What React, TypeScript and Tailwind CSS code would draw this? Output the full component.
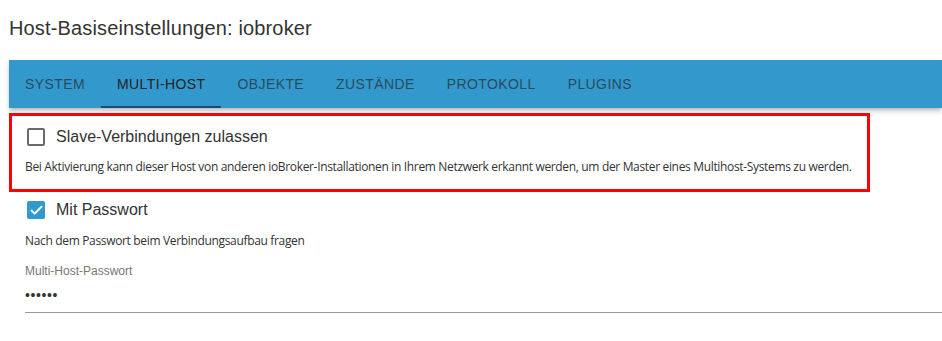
import { Check } from "lucide-react";

const TABS = ["System", "Multi-Host", "Objekte", "Zustände", "Protokoll", "Plugins"];

function CheckRow({ checked, label }: { checked: boolean; label: string }) {
  return (
    <div className="flex items-center h-[24px] pl-[27px]">
      {checked ? (
        <div className="w-[18px] h-[18px] rounded-[2px] bg-[#3399cc] flex items-center justify-center">
          <Check className="w-[15px] h-[15px] text-white" strokeWidth={3} />
        </div>
      ) : (
        <div className="w-[18px] h-[18px] rounded-[2px] border-2 border-[#6b6b6b]" />
      )}
      <span className="ml-[11px] text-[16px] text-[#333]">{label}</span>
    </div>
  );
}

export default function App() {
  return (
    <div className="w-[942px] h-[341px] bg-white overflow-hidden font-['Liberation_Sans',Arial,sans-serif]">
      <h1 className="pl-[9px] pt-[16px] text-[20px] leading-[24px] text-[#333] tracking-[0.15px]">
        Host-Basiseinstellungen: iobroker
      </h1>

      <div className="mt-[20px] ml-[9px] h-[48px] bg-[#3399cc] flex shadow-[0_2px_4px_-1px_rgba(0,0,0,0.2),0_4px_5px_0_rgba(0,0,0,0.14)]">
        {TABS.map((t) => {
          const active = t === "Multi-Host";
          return (
            <div
              key={t}
              className={[
                "relative px-[16px] flex items-center text-[14px] uppercase tracking-[0.4px]",
                active ? "text-[#222]" : "text-[#2b4b5c]",
              ].join(" ")}
            >
              {t}
              {active && (
                <div className="absolute left-0 right-0 bottom-0 h-[2px] bg-[#1d4a74]" />
              )}
            </div>
          );
        })}
      </div>

      <div className="mt-[5px] ml-[9px] w-[861px] h-[79px] border-[3px] border-[#ff0000] pt-[9px]">
        <div className="-ml-[12px]">
          <CheckRow checked={false} label="Slave-Verbindungen zulassen" />
        </div>
        <p className="mt-[10px] pl-[13px] text-[12px] leading-[16px] text-[#333] font-['Open_Sans',sans-serif] tracking-[-0.028em] whitespace-nowrap">
          Bei Aktivierung kann dieser Host von anderen ioBroker-Installationen in Ihrem Netzwerk erkannt werden, um der Master eines Multihost-Systems zu werden.
        </p>
      </div>

      <div className="mt-[6px]">
        <CheckRow checked={true} label="Mit Passwort" />
        <p className="mt-[11px] pl-[25px] text-[12px] leading-[16px] text-[#333] font-['Open_Sans',sans-serif] tracking-[-0.028em]">
          Nach dem Passwort beim Verbindungsaufbau fragen
        </p>
        <div className="mt-[14px] pl-[25px]">
          <div className="text-[12px] leading-[16px] text-[#777]">Multi-Host-Passwort</div>
          <div className="mt-[7px] text-[14px] text-[#333] leading-[18px] border-b border-[#9a9a9a] pb-[8px] tracking-[0.6px]">
            ••••••
          </div>
        </div>
      </div>
    </div>
  );
}
